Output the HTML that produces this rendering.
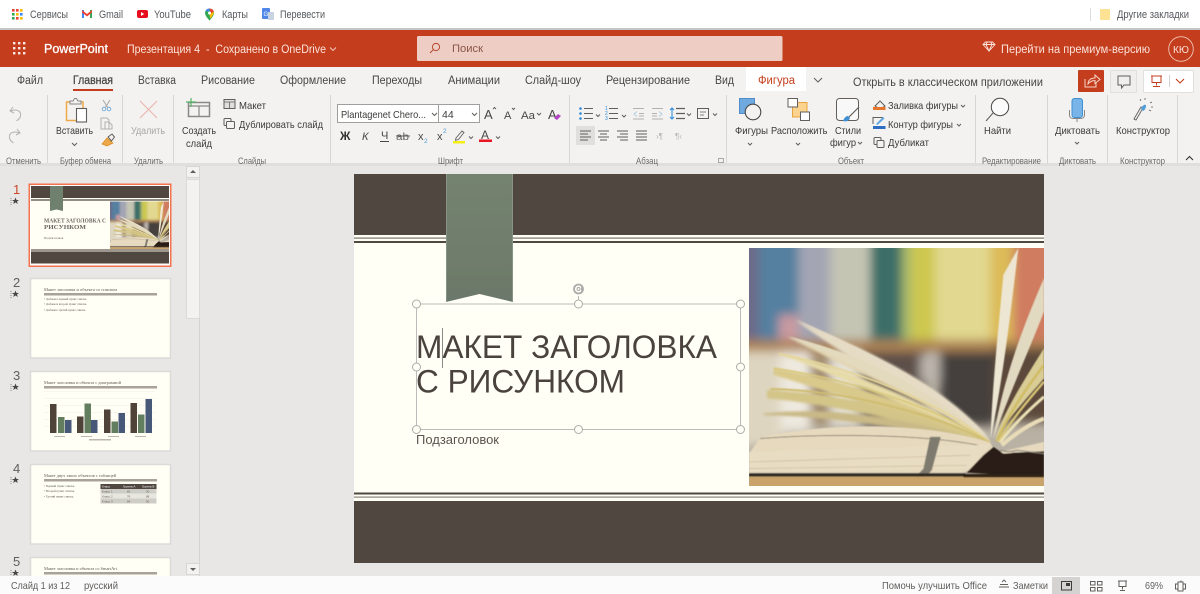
<!DOCTYPE html>
<html lang="ru"><head><meta charset="utf-8"><title>PowerPoint</title>
<style>
html,body{margin:0;padding:0;width:1200px;height:594px;overflow:hidden;background:#fff}
svg{display:block;font-family:"Liberation Sans",sans-serif}
text{white-space:pre}
.bm{font-size:10.8px;fill:#55585c}
.tab{font-size:11.5px;fill:#484644}
.l{font-size:9.5px;fill:#6b6967}
.c{font-size:10.5px;fill:#3b3a39}
.ch{fill:none;stroke:#605e5c;stroke-width:1}
.num{font-size:13px;fill:#605e5c}
.t{font-family:"Liberation Serif",serif;fill:#5f5852}
</style></head><body>
<svg width="1200" height="594" viewBox="0 0 1200 594" xmlns="http://www.w3.org/2000/svg">
<defs>
<filter id="b8" x="-20%" y="-20%" width="140%" height="140%"><feGaussianBlur stdDeviation="15"/></filter>
<filter id="b3" x="-20%" y="-20%" width="140%" height="140%"><feGaussianBlur stdDeviation="4"/></filter>
<filter id="b1"><feGaussianBlur stdDeviation="1.5"/></filter>
<filter id="s"><feGaussianBlur stdDeviation="0.32"/></filter>
<linearGradient id="rib" x1="0" y1="0" x2="0" y2="1"><stop offset="0" stop-color="#74826f"/><stop offset=".6" stop-color="#707d6d"/><stop offset="1" stop-color="#6b7869"/></linearGradient>
<clipPath id="ph"><rect x="26" y="40" width="886" height="712"/></clipPath>
<clipPath id="left"><rect x="0" y="166" width="186" height="410"/></clipPath>
<symbol id="book" viewBox="26 40 886 712" preserveAspectRatio="none">
<g clip-path="url(#ph)">
<rect x="26" y="40" width="886" height="712" fill="#b9b2a4"/>
<g filter="url(#b8)">
<rect x="-20" y="0" width="80" height="320" fill="#6d6a88"/>
<rect x="55" y="0" width="120" height="320" fill="#5580a0"/>
<rect x="115" y="240" width="60" height="80" fill="#c99aa0"/>
<rect x="175" y="0" width="100" height="320" fill="#a3a5b3"/>
<rect x="270" y="0" width="120" height="320" fill="#c5c5b4"/>
<rect x="390" y="0" width="95" height="320" fill="#3e6e68"/>
<rect x="485" y="0" width="30" height="320" fill="#a9bb6b"/>
<rect x="515" y="0" width="70" height="320" fill="#cdc84f"/>
<rect x="585" y="0" width="170" height="320" fill="#e2d88f"/>
<rect x="750" y="0" width="70" height="320" fill="#dcbb58"/>
<rect x="820" y="0" width="130" height="330" fill="#cf7c60"/>
<rect x="-20" y="315" width="970" height="35" fill="#ad8352"/>
<rect x="-20" y="350" width="150" height="280" fill="#ded5c0"/>
<rect x="120" y="350" width="90" height="240" fill="#eee9df"/>
<rect x="210" y="350" width="60" height="220" fill="#a58f70"/>
<rect x="270" y="360" width="90" height="210" fill="#e5e0d6"/>
<rect x="360" y="350" width="200" height="220" fill="#5d5048"/>
<rect x="540" y="360" width="70" height="80" fill="#bcb5ad"/>
<rect x="600" y="350" width="160" height="220" fill="#453f3d"/>
<rect x="760" y="340" width="190" height="220" fill="#5c4a3a"/>
</g>
<g filter="url(#b3)">
<path d="M165 255 C360 340 590 430 750 610 C610 520 360 400 165 255Z" fill="#e5dcc4"/>
<path d="M140 305 C340 360 590 470 745 615 C580 510 340 410 140 305Z" fill="#e2d6b2"/>
<path d="M115 355 C320 400 560 500 745 620 C560 530 320 440 115 355Z" fill="#e7dba8"/>
<path d="M100 400 C300 430 560 520 745 622 C560 560 300 480 100 420Z" fill="#d9c98a"/>
<path d="M80 465 C300 470 560 540 745 625 C560 575 300 510 80 490Z" fill="#d3c488"/>
<path d="M70 535 C300 510 560 560 745 628 C560 590 300 545 70 540Z" fill="#c9b987"/>
</g>
<g filter="url(#b1)">
<path d="M170 255 C370 345 610 450 752 618 C650 540 600 500 540 465 C430 395 290 320 170 255Z" fill="#e6dcc6"/>
<path d="M145 305 C340 350 560 450 750 620 C600 530 480 450 145 305Z" fill="#e3d9bd"/>
<path d="M115 357 C340 400 600 500 750 622" fill="none" stroke="#e5d69a" stroke-width="6"/>
<path d="M100 400 C320 430 600 520 750 622" fill="none" stroke="#d9c87a" stroke-width="5"/>
<path d="M90 462 C320 465 600 540 750 624" fill="none" stroke="#cfbd72" stroke-width="6"/>
<path d="M835 40 L790 120 C775 280 755 470 752 610 C790 420 810 250 835 40Z" fill="#ede6d3"/>
<path d="M912 130 C860 250 790 420 760 610 C810 470 870 340 912 230Z" fill="#e2d9c1"/>
<path d="M912 340 C850 440 790 530 765 615 C810 540 870 480 912 430Z" fill="#d9cc94"/>
<path d="M912 390 C850 470 800 550 770 618" fill="none" stroke="#cfbb60" stroke-width="7"/>
<path d="M912 440 C860 500 810 560 775 620" fill="none" stroke="#d9c676" stroke-width="7"/>
<path d="M912 485 C860 530 810 580 780 622" fill="none" stroke="#e9e0b6" stroke-width="9"/>
<path d="M912 550 C860 570 820 600 785 630" fill="none" stroke="#e8dcb8" stroke-width="12"/>
<path d="M60 608 C230 565 540 555 750 622 L760 640 L780 650 L912 620 L912 650 L820 650 L670 712 L26 712 L26 655Z" fill="#e6d9be"/>
<path d="M60 610 C250 595 560 595 740 635" fill="none" stroke="#5a4f42" stroke-width="2"/>
<path d="M26 650 L750 628 L690 700 L26 712Z" fill="#e8dcc2"/>
<path d="M26 680 L690 660 M26 700 L680 690" stroke="#cdbb9d" stroke-width="2" fill="none"/>
<path d="M570 605 L602 605 L575 705 L530 752 L500 752 L550 700Z" fill="#7e7a6e"/>
<path d="M760 635 L790 655 L912 648 L912 716 L750 716 L680 712 L730 660Z" fill="#2a1f17"/>
<path d="M780 645 C800 650 812 650 830 645 L912 655" fill="none" stroke="#8a8578" stroke-width="3"/>
<rect x="26" y="714" width="650" height="10" fill="#2e2924"/>
<rect x="26" y="724" width="886" height="32" fill="#c9a36a"/>
<rect x="670" y="716" width="242" height="10" fill="#2d2015"/>
</g>
</g>
</symbol>
</defs>

<g filter="url(#s)">
<!-- chrome bookmarks -->
<rect width="1200" height="28" fill="#fff"/>
<rect y="28" width="1200" height="2" fill="#c4c6c8"/>
<g>
<g fill="#ea4335"><rect x="12" y="9" width="2.6" height="2.6"/><rect x="16" y="9" width="2.6" height="2.6"/></g><rect x="20" y="9" width="2.6" height="2.6" fill="#fbbc04"/>
<g fill="#34a853"><rect x="12" y="13" width="2.6" height="2.6"/></g><rect x="16" y="13" width="2.6" height="2.6" fill="#fbbc04"/><rect x="20" y="13" width="2.6" height="2.6" fill="#4285f4"/>
<rect x="12" y="17" width="2.6" height="2.6" fill="#34a853"/><rect x="16" y="17" width="2.6" height="2.6" fill="#ea4335"/><rect x="20" y="17" width="2.6" height="2.6" fill="#fbbc04"/>
</g>
<text class="bm" x="30" y="18" textLength="38" lengthAdjust="spacingAndGlyphs">Сервисы</text>
<path d="M82 10h2v8h-2z" fill="#4285f4"/><path d="M90 10h2v8h-2z" fill="#34a853"/><path d="M82 10l5 4 5-4v2.500l-5 4-5-4z" fill="#ea4335"/>
<text class="bm" x="99" y="18" textLength="24" lengthAdjust="spacingAndGlyphs">Gmail</text>
<rect x="137" y="10" width="11" height="8" rx="2" fill="#e8101c"/><path d="M141 12l3.200 2-3.200 2z" fill="#fff"/>
<text class="bm" x="154" y="18" textLength="37" lengthAdjust="spacingAndGlyphs">YouTube</text>
<path d="M209.500 8.500a4.500 4.500 0 0 0-4.500 4.500c0 3 4.500 7.500 4.500 7.500s4.500-4.500 4.500-7.500a4.500 4.500 0 0 0-4.500-4.500z" fill="#34a853"/><path d="M205.500 11a4.500 4.500 0 0 1 4-2.500v3z" fill="#4285f4"/><path d="M209.500 8.500a4.500 4.500 0 0 1 4.300 3l-3 2z" fill="#ea4335"/><path d="M213.800 11.500c.5 2-1.800 5-3.500 7l-.8-4z" fill="#fbbc04"/><circle cx="209.500" cy="13" r="1.500" fill="#fff"/>
<text class="bm" x="222" y="18" textLength="26" lengthAdjust="spacingAndGlyphs">Карты</text>
<rect x="262" y="8" width="8" height="11" rx="1" fill="#4f86e8"/><rect x="268" y="12" width="6" height="8" rx="1" fill="#c9d3e2"/><text x="263.500" y="16" font-size="6" fill="#fff">G</text>
<text class="bm" x="280" y="18" textLength="45" lengthAdjust="spacingAndGlyphs">Перевести</text>
<rect x="1090" y="8" width="1" height="13" fill="#ddd"/>
<path d="M1100 10a1 1 0 0 1 1-1h8a1 1 0 0 1 1 1v9a1 1 0 0 1-1 1h-8a1 1 0 0 1-1-1z" fill="#fde293"/>
<text class="bm" x="1117" y="18" textLength="72" lengthAdjust="spacingAndGlyphs">Другие закладки</text>

<!-- title bar -->
<rect y="30" width="1200" height="37" fill="#c43e1c"/>
<g fill="#fbe9e3"><rect x="13" y="42" width="2.400" height="2.400"/><rect x="18" y="42" width="2.400" height="2.400"/><rect x="23" y="42" width="2.400" height="2.400"/><rect x="13" y="47" width="2.400" height="2.400"/><rect x="18" y="47" width="2.400" height="2.400"/><rect x="23" y="47" width="2.400" height="2.400"/><rect x="13" y="52" width="2.400" height="2.400"/><rect x="18" y="52" width="2.400" height="2.400"/><rect x="23" y="52" width="2.400" height="2.400"/></g>
<text x="44" y="53" font-size="12.500" fill="#fff" stroke="#fff" stroke-width=".3" textLength="64" lengthAdjust="spacingAndGlyphs">PowerPoint</text>
<text x="127" y="53" font-size="11.500" fill="#fbe3db" textLength="199" lengthAdjust="spacingAndGlyphs">Презентация 4  -  Сохранено в OneDrive</text>
<path d="M330 47.500l3 3 3-3" fill="none" stroke="#f5d5ca" stroke-width=".9"/>
<rect x="417" y="36" width="365.500" height="25" rx="1.500" fill="#edcdc4"/>
<circle cx="436" cy="47" r="3.600" fill="none" stroke="#b5492d" stroke-width="1"/><path d="M433.300 49.700l-3.300 3.300" stroke="#b5492d" stroke-width="1"/>
<text x="452" y="52" font-size="11" fill="#8a5446" textLength="31" lengthAdjust="spacingAndGlyphs">Поиск</text>
<path d="M983 44.500l2.500-2.500h7l2.500 2.500-6 6.500zM983 44.500h12M987 42.500l-1 2 3 6.500 3-6.500-1-2" fill="none" stroke="#fbe3db" stroke-width=".9"/>
<text x="1001" y="53" font-size="11.500" fill="#fbe3db" textLength="149" lengthAdjust="spacingAndGlyphs">Перейти на премиум-версию</text>
<circle cx="1181" cy="49" r="12.300" fill="none" stroke="#f0c4b6" stroke-width=".9"/>
<text x="1181" y="53" font-size="10" fill="#fbe3db" text-anchor="middle">КЮ</text>

<!-- ribbon -->
<rect y="67" width="1200" height="96" fill="#f3f2f1"/>
<rect y="163" width="1200" height="3" fill="#e1dfdd"/>
<rect x="746" y="67" width="60" height="24" fill="#fff"/>
<text class="tab" x="17" y="84" textLength="26" lengthAdjust="spacingAndGlyphs">Файл</text>
<text class="tab" x="73" y="84" stroke="#484644" stroke-width=".25" textLength="40" lengthAdjust="spacingAndGlyphs">Главная</text>
<rect x="73" y="89" width="40" height="2" fill="#c43e1c"/>
<text class="tab" x="138" y="84" textLength="38" lengthAdjust="spacingAndGlyphs">Вставка</text>
<text class="tab" x="201" y="84" textLength="54" lengthAdjust="spacingAndGlyphs">Рисование</text>
<text class="tab" x="280" y="84" textLength="66" lengthAdjust="spacingAndGlyphs">Оформление</text>
<text class="tab" x="372" y="84" textLength="50" lengthAdjust="spacingAndGlyphs">Переходы</text>
<text class="tab" x="448" y="84" textLength="52" lengthAdjust="spacingAndGlyphs">Анимации</text>
<text class="tab" x="525" y="84" textLength="56" lengthAdjust="spacingAndGlyphs">Слайд-шоу</text>
<text class="tab" x="606" y="84" textLength="84" lengthAdjust="spacingAndGlyphs">Рецензирование</text>
<text class="tab" x="715" y="84" textLength="19" lengthAdjust="spacingAndGlyphs">Вид</text>
<text class="tab" x="758" y="84" style="fill:#c43e1c" textLength="37" lengthAdjust="spacingAndGlyphs">Фигура</text>
<path d="M814 78l4 4 4-4" class="ch"/>
<text class="tab" x="853" y="86" textLength="190" lengthAdjust="spacingAndGlyphs">Открыть в классическом приложении</text>
<rect x="1078" y="70" width="26" height="22" rx="1" fill="#c43e1c"/>
<path d="M1085 79v8h11v-4M1088 84c0-4 3-6 7-6v-3l5 4.500-5 4v-3c-3 0-5 1-7 3.500z" fill="none" stroke="#f6d5ca" stroke-width="1"/>
<rect x="1110.500" y="70.500" width="26" height="22" rx="1" fill="#f0efee" stroke="#e1dfdd"/>
<path d="M1118 76h12v9h-6l-2.500 3v-3h-3.500z" fill="none" stroke="#605e5c"/>
<rect x="1143.500" y="70.500" width="50" height="22" rx="1" fill="#fff" stroke="#e1dfdd"/>
<path d="M1151 76h11M1152 76.500v6h9v-6M1156.500 82.500v3M1153 86.500h7" fill="none" stroke="#c43e1c"/>
<rect x="1169" y="75" width="1" height="12" fill="#d2d0ce"/>
<path d="M1176 79l4 4 4-4" fill="none" stroke="#c43e1c" stroke-width="1.100"/>

<!-- dividers -->
<g fill="#d8d6d4"><rect x="47" y="95" width="1" height="68"/><rect x="122" y="95" width="1" height="68"/><rect x="173" y="95" width="1" height="68"/><rect x="330" y="95" width="1" height="68"/><rect x="569" y="95" width="1" height="68"/><rect x="726" y="95" width="1" height="68"/><rect x="975" y="95" width="1" height="68"/><rect x="1047" y="95" width="1" height="68"/><rect x="1107" y="95" width="1" height="68"/><rect x="1177" y="95" width="1" height="68"/></g>
<text class="l" x="6" y="164" textLength="35" lengthAdjust="spacingAndGlyphs">Отменить</text>
<text class="l" x="60" y="164" textLength="51" lengthAdjust="spacingAndGlyphs">Буфер обмена</text>
<text class="l" x="134" y="164" textLength="29" lengthAdjust="spacingAndGlyphs">Удалить</text>
<text class="l" x="238" y="164" textLength="28" lengthAdjust="spacingAndGlyphs">Слайды</text>
<text class="l" x="438" y="164" textLength="25" lengthAdjust="spacingAndGlyphs">Шрифт</text>
<text class="l" x="636" y="164" textLength="22" lengthAdjust="spacingAndGlyphs">Абзац</text>
<text class="l" x="838" y="164" textLength="26" lengthAdjust="spacingAndGlyphs">Объект</text>
<text class="l" x="982" y="164" textLength="59" lengthAdjust="spacingAndGlyphs">Редактирование</text>
<text class="l" x="1059" y="164" textLength="37" lengthAdjust="spacingAndGlyphs">Диктовать</text>
<text class="l" x="1120" y="164" textLength="45" lengthAdjust="spacingAndGlyphs">Конструктор</text>

<!-- undo/redo -->
<path d="M13 107l-3 4 4 2M10.500 111c6-2.500 11 0 10 5-.5 2.500-2 3.500-4 5" fill="none" stroke="#b4b2b0"/>
<path d="M17 129l3 4-4 2M19.500 133c-6-2.500-11 0-10 5 .5 2.500 2 3.500 4 5" fill="none" stroke="#b4b2b0"/>
<!-- paste -->
<path d="M70 102h-3.500v18.500h10" fill="none" stroke="#eda84a" stroke-width="1.500"/><path d="M79 102h4v6" fill="none" stroke="#eda84a" stroke-width="1.500"/>
<path d="M70 101h3l1.500-2.500h2l1.500 2.500h3v3h-11z" fill="#f3f2f1" stroke="#8a8886"/>
<rect x="76.500" y="108.500" width="10" height="13.500" fill="#fff" stroke="#605e5c" stroke-width="1.100"/>
<text class="c" x="56" y="134" textLength="37" lengthAdjust="spacingAndGlyphs">Вставить</text>
<path d="M72 143l2.500 2.500 2.500-2.500" class="ch"/>
<path d="M103 100l5 8M110 100l-5 8" stroke="#a9a7a5" fill="none"/><circle cx="104" cy="109" r="1.800" fill="none" stroke="#7db0d8"/><circle cx="109" cy="109" r="1.800" fill="none" stroke="#7db0d8"/>
<path d="M101 118h6l2 2v9h-8zM105 122h4l3 3v4h-7z" fill="#f3f2f1" stroke="#b4b2b0"/>
<path d="M102 144l5-6 6 5-6 3z" fill="#eda84a" stroke="#d98a1c" stroke-width=".7"/><path d="M108 137l4-3 2.500 3-3 4z" fill="#f3f2f1" stroke="#605e5c"/>
<!-- delete -->
<path d="M140 101l17 17M157 101l-17 17" stroke="#eab5ac" stroke-width="1.100"/>
<text class="c" x="131" y="134" style="fill:#a9a7a5" textLength="34" lengthAdjust="spacingAndGlyphs">Удалить</text>
<!-- new slide -->
<rect x="188.500" y="102.500" width="21" height="14" fill="#f3f2f1" stroke="#8a8886" stroke-width="1.500"/><path d="M189 106h20M199 106v10" stroke="#8a8886" stroke-width="1.200"/>
<path d="M186 102h10M191 98v9" stroke="#58b368" stroke-width="1.200"/>
<text class="c" x="182" y="134" textLength="34" lengthAdjust="spacingAndGlyphs">Создать</text>
<text class="c" x="186" y="147" textLength="26" lengthAdjust="spacingAndGlyphs">слайд</text>
<rect x="224" y="99.500" width="11" height="9" fill="#e1dfdd" stroke="#605e5c"/><path d="M224 102h11M229.500 102v6" stroke="#605e5c" stroke-width=".8"/>
<text class="c" x="239" y="109" textLength="27" lengthAdjust="spacingAndGlyphs">Макет</text>
<rect x="224" y="118.500" width="7" height="7" rx="1" fill="none" stroke="#605e5c"/><rect x="226.500" y="121.500" width="8" height="7" rx="1" fill="#f3f2f1" stroke="#605e5c"/>
<text class="c" x="239" y="128" textLength="84" lengthAdjust="spacingAndGlyphs">Дублировать слайд</text>

<!-- font -->
<rect x="337.500" y="104.500" width="142" height="18" fill="#fff" stroke="#a19f9d"/><rect x="438" y="104" width="1" height="18" fill="#a19f9d"/>
<text x="341" y="118" font-size="10.500" fill="#3b3a39" textLength="85" lengthAdjust="spacingAndGlyphs">Plantagenet Chero...</text>
<path d="M432 113l2.500 2.500 2.500-2.500" class="ch"/>
<text x="442" y="118" font-size="10.500" fill="#3b3a39">44</text>
<path d="M472 113l2.500 2.500 2.500-2.500" class="ch"/>
<text x="484" y="119" font-size="13" fill="#484644">A</text><path d="M493 109l1.500-1.500 1.500 1.500" class="ch"/>
<text x="504" y="119" font-size="11" fill="#484644">A</text><path d="M512 108l1.500 1.500 1.500-1.500" class="ch"/>
<text x="521" y="119" font-size="11" fill="#484644" textLength="14" lengthAdjust="spacingAndGlyphs">Aa</text><path d="M537 113l2 2 2-2" class="ch"/>
<text x="548" y="119" font-size="13" fill="#484644">A</text><path d="M554 118l4-4 3 2-4 4z" fill="#b146c2"/>
<text x="340" y="140" font-size="11.500" font-weight="bold" fill="#323130">Ж</text>
<text x="362" y="140" font-size="11" font-style="italic" fill="#484644">К</text>
<text x="381" y="139" font-size="11" fill="#484644">Ч</text><rect x="380" y="141" width="9" height="1" fill="#484644"/>
<text x="396" y="140" font-size="10" fill="#605e5c" textLength="13" lengthAdjust="spacingAndGlyphs">ab</text><rect x="396" y="135.500" width="14" height="1" fill="#605e5c"/>
<text x="418" y="140" font-size="11" fill="#484644">x</text><text x="424" y="143" font-size="6.500" fill="#4f9ed8">2</text>
<text x="437" y="140" font-size="11" fill="#484644">x</text><text x="443" y="133" font-size="6.500" fill="#4f9ed8">2</text>
<path d="M456 138l6-7 2 1.500-5.500 7-3 .8z" fill="none" stroke="#605e5c" stroke-width=".9"/><rect x="453" y="141" width="12" height="2.500" fill="#f5ee18"/>
<path d="M469 136.500l2 2 2-2" class="ch"/>
<text x="481" y="139" font-size="12" fill="#484644">A</text><rect x="479" y="139.500" width="13" height="2.500" fill="#e81224"/>
<path d="M496 136.500l2 2 2-2" class="ch"/>

<!-- para -->
<g fill="#2b88d8"><circle cx="580.500" cy="108.500" r="1.300"/><circle cx="580.500" cy="113.500" r="1.300"/><circle cx="580.500" cy="118.500" r="1.300"/></g>
<path d="M584 108.500h9M584 113.500h9M584 118.500h9" stroke="#605e5c" fill="none"/><path d="M596 114.500l2 2 2-2" class="ch"/>
<text x="605" y="110" font-size="5" fill="#2b88d8">1</text><text x="605" y="115" font-size="5" fill="#2b88d8">2</text><text x="605" y="120" font-size="5" fill="#2b88d8">3</text>
<path d="M609 108.500h9M609 113.500h9M609 118.500h9" stroke="#605e5c" fill="none"/><path d="M622 115l2 2 2-2" class="ch"/>
<path d="M633 108.500h11M639 113.500h5M639 116h5M633 119h11" stroke="#b4b2b0" fill="none"/><path d="M637 111.500l-3 2.500 3 2.500" fill="none" stroke="#b4cfe3"/>
<path d="M652 108.500h11M652 113.500h5M652 116h5M652 119h11" stroke="#b4b2b0" fill="none"/><path d="M659 111.500l3 2.500-3 2.500" fill="none" stroke="#b4cfe3"/>
<path d="M672 108v11M670 110l2-2 2 2M670 117l2 2 2-2" fill="none" stroke="#2b88d8"/><path d="M676 108.500h9M676 113.500h9M676 118.500h9" stroke="#605e5c" fill="none" stroke-width="1.200"/><path d="M687 113.500l2 2 2-2" class="ch"/>
<rect x="697.500" y="108.500" width="11" height="10" fill="none" stroke="#605e5c"/><path d="M700 112h6M700 115h4" stroke="#605e5c" fill="none" stroke-width=".8"/><path d="M713 113.500l2 2 2-2" class="ch"/>
<rect x="576" y="126" width="19" height="19" fill="#e1dfdd"/>
<path d="M580 131h11M580 134h8M580 137h11M580 140h8" stroke="#605e5c" fill="none"/>
<path d="M598 131h11M600 134h7M598 137h11M600 140h7" stroke="#605e5c" fill="none"/>
<path d="M617 131h11M620 134h8M617 137h11M620 140h8" stroke="#605e5c" fill="none"/>
<path d="M636 131h11M636 134h11M636 137h11M636 140h11" stroke="#605e5c" fill="none"/>
<text x="656" y="139" font-size="8" fill="#b4b2b0">›¶</text><text x="675" y="139" font-size="8" fill="#b4b2b0">¶‹</text>
<rect x="718.500" y="158.500" width="5" height="4" fill="none" stroke="#8a8886" stroke-width=".7"/>

<!-- shape group -->
<rect x="739.500" y="98.500" width="15" height="15" fill="#6ea9e0" stroke="#4f8ccc"/><circle cx="753" cy="112" r="7.800" fill="#f3f2f1" stroke="#484644" stroke-width="1.100"/>
<text class="c" x="735" y="134" textLength="33" lengthAdjust="spacingAndGlyphs">Фигуры</text><path d="M748 143l2 2 2-2" class="ch"/>
<rect x="792.500" y="102.500" width="14.500" height="14.500" fill="#fbd38e" stroke="#e8a33d"/><rect x="788" y="98.500" width="9.500" height="8.500" fill="#fff" stroke="#605e5c"/><rect x="800.500" y="112" width="9" height="8.500" fill="#fff" stroke="#605e5c"/>
<text class="c" x="771" y="134" textLength="56.500" lengthAdjust="spacingAndGlyphs">Расположить</text><path d="M796 143l2 2 2-2" class="ch"/>
<rect x="836.500" y="98.500" width="22" height="22" rx="3" fill="#f8f8f8" stroke="#605e5c"/>
<path d="M859 107l-10 10" stroke="#605e5c" stroke-width="1.200"/><path d="M843 121c1-3 3-5 5-5l2 2c-1 3-4 4-7 3z" fill="#3f8fd2"/>
<text class="c" x="835" y="134" textLength="26" lengthAdjust="spacingAndGlyphs">Стили</text>
<text class="c" x="830" y="146" textLength="26" lengthAdjust="spacingAndGlyphs">фигур</text><path d="M858 142l2 2 2-2" class="ch"/>
<path d="M875 106l5-5 5 5-5 3z" fill="#f3f2f1" stroke="#605e5c"/><rect x="873" y="107" width="12.500" height="3" fill="#e8762c"/>
<text class="c" x="888" y="109" textLength="70" lengthAdjust="spacingAndGlyphs">Заливка фигуры</text><path d="M961 105l2 2 2-2" class="ch"/>
<path d="M873 118.500v-1h10M873 118v6" fill="none" stroke="#605e5c"/><path d="M876 124l7-7 1.500 1.500-7 6.500z" fill="#5ba6e3"/><rect x="873" y="126" width="12.500" height="3" fill="#2f6ec2"/>
<text class="c" x="888" y="128" textLength="65" lengthAdjust="spacingAndGlyphs">Контур фигуры</text><path d="M957 124l2 2 2-2" class="ch"/>
<rect x="874" y="137.500" width="7" height="7" rx="1" fill="none" stroke="#605e5c"/><rect x="877" y="140.500" width="7" height="7" rx="1" fill="#f3f2f1" stroke="#605e5c"/>
<text class="c" x="888" y="146" textLength="41" lengthAdjust="spacingAndGlyphs">Дубликат</text>

<!-- find -->
<circle cx="1000" cy="107" r="8.700" fill="#fbfbfb" stroke="#484644"/><path d="M993 113l-7 8" stroke="#605e5c"/>
<text class="c" x="984" y="134" textLength="27" lengthAdjust="spacingAndGlyphs">Найти</text>
<!-- dictate -->
<rect x="1072" y="98.500" width="10.500" height="19" rx="2.500" fill="#79b4e8" stroke="#3f8fd2"/>
<path d="M1069.500 110v5c0 2.500 2 3.500 4 3.500h7c2 0 4-1 4-3.500v-5M1077 118.500v3.500" fill="none" stroke="#8a8886"/>
<text class="c" x="1055" y="134" textLength="45" lengthAdjust="spacingAndGlyphs">Диктовать</text><path d="M1075 142l2 2 2-2" class="ch"/>
<!-- designer -->
<path d="M1134 119l7-12 2 1-7 12z" fill="#f3f2f1" stroke="#605e5c" stroke-width=".9"/><path d="M1141 109c1-3 3-5 5-4 0 3-1 5-3 6z" fill="#4f9ed8"/>
<path d="M1145 100v-2M1150 103l2-1M1151 107h2M1141 101l-1-2M1149 110l2 1" stroke="#605e5c" fill="none" stroke-width=".8"/>
<text class="c" x="1116" y="134" textLength="54" lengthAdjust="spacingAndGlyphs">Конструктор</text>
<path d="M1186 160l3.500-3.500 3.500 3.500" fill="none" stroke="#323130" stroke-width="1.100"/>

<!-- workspace -->
<rect y="166" width="1200" height="410" fill="#e8e7e6"/>
<rect x="199" y="166" width="1" height="410" fill="#d5d3d1"/>
<rect x="186.500" y="166.500" width="13" height="11" fill="#f3f2f1" stroke="#d8d6d4"/><path d="M193 170l-3 3h6z" fill="#605e5c"/>
<rect x="186.500" y="179.500" width="13" height="139" fill="#f3f2f1" stroke="#dcdad8"/>
<rect x="186.500" y="563.500" width="13" height="11" fill="#f3f2f1" stroke="#d8d6d4"/><path d="M193 571l-3-3h6z" fill="#605e5c"/>

<!-- thumbnails -->
<g clip-path="url(#left)">
<text class="num" x="13" y="194" style="fill:#c9482a">1</text><path d="M15.500 197.500l1 2.500h2.500l-2 1.500.8 2.500-2.300-1.500-2.300 1.500.8-2.500-2-1.500h2.500z" fill="#484644"/><path d="M11 198v7" stroke="#8a8886" stroke-dasharray="1 1"/>
<rect x="28.500" y="183.500" width="143" height="83.500" fill="#f2734e"/>
<rect x="30" y="185" width="140" height="80.500" fill="#fff"/>
<rect x="31" y="186" width="138" height="78.500" fill="#fffff5"/>
<rect x="31" y="186" width="138" height="12" fill="#504741"/>
<rect x="31" y="199" width="138" height="2" fill="#938d87"/>
<rect x="31" y="249" width="138" height="3" fill="#9c968f"/>
<rect x="31" y="252" width="138" height="11.500" fill="#504741"/>
<path d="M50 186h13v25l-6.500-1.500-6.500 1.500z" fill="#70806e"/>
<svg x="110" y="201.500" width="59" height="47.500"><use href="#book" width="59" height="47.500"/></svg>
<text x="44" y="222.500" font-size="6" font-weight="bold" class="t" style="fill:#6c655f" textLength="62" lengthAdjust="spacingAndGlyphs">МАКЕТ ЗАГОЛОВКА С</text>
<text x="44" y="229" font-size="6" font-weight="bold" class="t" style="fill:#6c655f" textLength="42" lengthAdjust="spacingAndGlyphs">РИСУНКОМ</text>
<text x="44" y="239" font-size="3.300" class="t">Подзаголовок</text>

<text class="num" x="13" y="287">2</text><path d="M15.500 290.500l1 2.500h2.500l-2 1.500.8 2.500-2.300-1.500-2.300 1.500.8-2.500-2-1.500h2.500z" fill="#484644"/><path d="M11 291v7" stroke="#8a8886" stroke-dasharray="1 1"/>
<rect x="30.500" y="278.500" width="140" height="79.500" fill="#fffff5" stroke="#dcdad8" stroke-width="1.500"/>
<text x="44" y="291" font-size="3.600" class="t" textLength="73" lengthAdjust="spacingAndGlyphs">Макет заголовка и объекта со списком</text>
<rect x="44" y="293" width="113" height="2.500" fill="#a8a299"/>
<text x="44" y="300" font-size="3.200" class="t" textLength="43" lengthAdjust="spacingAndGlyphs">• Добавьте первый пункт списка.</text>
<text x="44" y="305" font-size="3.200" class="t" textLength="43" lengthAdjust="spacingAndGlyphs">• Добавьте второй пункт списка.</text>
<text x="44" y="311" font-size="3.200" class="t" textLength="42" lengthAdjust="spacingAndGlyphs">• Добавьте третий пункт списка.</text>

<text class="num" x="13" y="380">3</text><path d="M15.500 383.500l1 2.500h2.500l-2 1.500.8 2.500-2.300-1.500-2.300 1.500.8-2.500-2-1.500h2.500z" fill="#484644"/><path d="M11 384v7" stroke="#8a8886" stroke-dasharray="1 1"/>
<rect x="30.500" y="371.500" width="140" height="79.500" fill="#fffff5" stroke="#dcdad8" stroke-width="1.500"/>
<text x="44" y="384" font-size="3.600" class="t" textLength="77" lengthAdjust="spacingAndGlyphs">Макет заголовка и объекта с диаграммой</text>
<rect x="44" y="386" width="113" height="2.500" fill="#a8a299"/>
<g fill="#f0f0e6"><rect x="44" y="391" width="111" height=".6"/><rect x="44" y="398" width="111" height=".6"/><rect x="44" y="405" width="111" height=".6"/><rect x="44" y="412" width="111" height=".6"/><rect x="44" y="419" width="111" height=".6"/><rect x="44" y="426" width="111" height=".6"/></g>
<g fill="#504238"><rect x="50" y="404" width="6.500" height="29"/><rect x="77" y="416.500" width="6.500" height="16.500"/><rect x="104" y="409.500" width="6.500" height="23.500"/><rect x="130.500" y="403" width="6.500" height="30"/></g>
<g fill="#647e5e"><rect x="58" y="417" width="6.500" height="16"/><rect x="84.500" y="403.500" width="6.500" height="29.500"/><rect x="111.500" y="421.500" width="6.500" height="11.500"/><rect x="138" y="414.500" width="6.500" height="18.500"/></g>
<g fill="#475878"><rect x="65" y="420" width="6.500" height="13"/><rect x="91" y="420" width="6.500" height="13"/><rect x="118.500" y="413" width="6.500" height="20"/><rect x="145.500" y="399" width="6.500" height="34"/></g>
<g fill="#bdb8ae"><rect x="54" y="436" width="11" height="1"/><rect x="81" y="436" width="11" height="1"/><rect x="108" y="436" width="11" height="1"/><rect x="135" y="436" width="11" height="1"/><rect x="89" y="439" width="22" height="1.500"/></g>

<text class="num" x="13" y="473">4</text><path d="M15.500 476.500l1 2.500h2.500l-2 1.500.8 2.500-2.300-1.500-2.300 1.500.8-2.500-2-1.500h2.500z" fill="#484644"/><path d="M11 477v7" stroke="#8a8886" stroke-dasharray="1 1"/>
<rect x="30.500" y="464.500" width="140" height="79.500" fill="#fffff5" stroke="#dcdad8" stroke-width="1.500"/>
<text x="44" y="477" font-size="3.600" class="t" textLength="72" lengthAdjust="spacingAndGlyphs">Макет двух таких объектов с таблицей</text>
<rect x="44" y="479" width="113" height="2.500" fill="#a8a299"/>
<text x="44" y="487" font-size="3.200" class="t" textLength="31" lengthAdjust="spacingAndGlyphs">• Первый пункт списка.</text>
<text x="44" y="492" font-size="3.200" class="t" textLength="31" lengthAdjust="spacingAndGlyphs">• Второй пункт списка.</text>
<text x="44" y="497.500" font-size="3.200" class="t" textLength="30" lengthAdjust="spacingAndGlyphs">• Третий пункт списка.</text>
<rect x="100.500" y="484" width="56" height="5" fill="#504741"/>
<rect x="100.500" y="489" width="56" height="4.500" fill="#cfcdc8"/><rect x="100.500" y="493.500" width="56" height="5" fill="#e8e7df"/><rect x="100.500" y="498.500" width="56" height="5" fill="#cfcdc8"/>
<g font-size="3" fill="#6a645e"><text x="102" y="492.500">Класс 1</text><text x="102" y="497.500">Класс 2</text><text x="102" y="502.500">Класс 3</text><text x="127" y="492.500">82</text><text x="127" y="497.500">76</text><text x="127" y="502.500">84</text><text x="146" y="492.500">30</text><text x="146" y="497.500">88</text><text x="146" y="502.500">90</text></g>
<g font-size="3" fill="#fff"><text x="102" y="487.500">Класс</text><text x="123" y="487.500">Группа А</text><text x="142" y="487.500">Группа В</text></g>

<text class="num" x="13" y="566">5</text><path d="M15.500 569.500l1 2.500h2.500l-2 1.500.8 2.500-2.300-1.500-2.300 1.500.8-2.500-2-1.500h2.500z" fill="#484644"/><path d="M11 570v7" stroke="#8a8886" stroke-dasharray="1 1"/>
<rect x="30.500" y="557.500" width="140" height="40" fill="#fffff5" stroke="#dcdad8" stroke-width="1.500"/>
<text x="44" y="570" font-size="3.600" class="t" textLength="73" lengthAdjust="spacingAndGlyphs">Макет заголовка и объекта со SmartArt</text>
<rect x="44" y="572" width="113" height="2.500" fill="#a8a299"/>
</g>

<!-- main slide -->
<rect x="354" y="174" width="690" height="389" fill="#fffff5"/>
<rect x="354" y="174" width="690" height="61" fill="#504741"/>
<rect x="354" y="237.500" width="690" height="1.200" fill="#7b736d"/>
<rect x="354" y="241" width="690" height="2" fill="#4f4640"/>
<rect x="354" y="492.500" width="690" height="2" fill="#4f4640"/>
<rect x="354" y="496.500" width="690" height="1.200" fill="#8a837c"/>
<rect x="354" y="501" width="690" height="62" fill="#504741"/>
<path d="M446 174h67v128l-33.500-8-33.500 8z" fill="url(#rib)"/>
<path d="M446.500 174v128M512.500 174v128" stroke="#8d9a8b" stroke-width=".8"/>
<svg x="749" y="248" width="295" height="238"><use href="#book" width="295" height="238"/></svg>

<text x="416" y="358" font-size="32.500" fill="#4a423d" textLength="301" lengthAdjust="spacingAndGlyphs">МАКЕТ ЗАГОЛОВКА</text>
<text x="416" y="392.500" font-size="32.500" fill="#4a423d" textLength="209" lengthAdjust="spacingAndGlyphs">С РИСУНКОМ</text>
<rect x="442" y="328" width="1" height="40" fill="#8a8a8a"/>
<text x="416" y="444" font-size="12.800" fill="#5d5550" textLength="83" lengthAdjust="spacingAndGlyphs">Подзаголовок</text>

<rect x="416.500" y="304" width="324" height="125.500" fill="none" stroke="#bdbbb9" stroke-width="1"/>
<path d="M578.500 296v8" stroke="#bdbbb9"/>
<g fill="#fffff5" stroke="#adabaa" stroke-width="1"><circle cx="416.500" cy="304" r="4"/><circle cx="578.500" cy="304" r="4"/><circle cx="740.500" cy="304" r="4"/><circle cx="416.500" cy="367" r="4"/><circle cx="740.500" cy="367" r="4"/><circle cx="416.500" cy="429.500" r="4"/><circle cx="578.500" cy="429.500" r="4"/><circle cx="740.500" cy="429.500" r="4"/></g>
<circle cx="578.500" cy="289" r="4.500" fill="#fffff5" stroke="#adabaa" stroke-width="1.800"/><path d="M581 287l3 2-3 2" fill="#adabaa"/><circle cx="578.500" cy="289" r="1.500" fill="none" stroke="#adabaa"/>

<!-- status -->
<rect y="576" width="1200" height="18" fill="#fbfbfb"/>
<text x="11" y="589" font-size="10.500" fill="#605e5c" textLength="59" lengthAdjust="spacingAndGlyphs">Слайд 1 из 12</text>
<text x="84" y="589" font-size="10.500" fill="#605e5c" textLength="34" lengthAdjust="spacingAndGlyphs">русский</text>
<text x="882" y="589" font-size="10.500" fill="#605e5c" textLength="105" lengthAdjust="spacingAndGlyphs">Помочь улучшить Office</text>
<path d="M999 587h10M1000 584.500h8M1002 582l2-2 2 2" fill="none" stroke="#605e5c" stroke-width=".9"/>
<text x="1013" y="589" font-size="10.500" fill="#605e5c" textLength="35" lengthAdjust="spacingAndGlyphs">Заметки</text>
<rect x="1052" y="577" width="28" height="17" fill="#d5d3d1"/>
<rect x="1061.500" y="581.500" width="10" height="8.500" fill="none" stroke="#3b3a39"/><rect x="1066" y="583" width="4" height="3" fill="#3b3a39"/>
<g fill="none" stroke="#605e5c"><rect x="1090.500" y="581.500" width="4.500" height="3.500"/><rect x="1097.500" y="581.500" width="4.500" height="3.500"/><rect x="1090.500" y="587.500" width="4.500" height="3.500"/><rect x="1097.500" y="587.500" width="4.500" height="3.500"/>
<path d="M1118 581h9M1119 581v5.500h7V581M1122.500 586.500v3M1120 590.500h5"/>
<path d="M1178 582h5v9h-5zM1178 584h-2.500v5h2.500M1183 584h2.500v5h-2.500M1181 580.500v1"/></g>
<text x="1145" y="589" font-size="10.500" fill="#605e5c" textLength="18" lengthAdjust="spacingAndGlyphs">69%</text>
</g>
</svg>
</body></html>
